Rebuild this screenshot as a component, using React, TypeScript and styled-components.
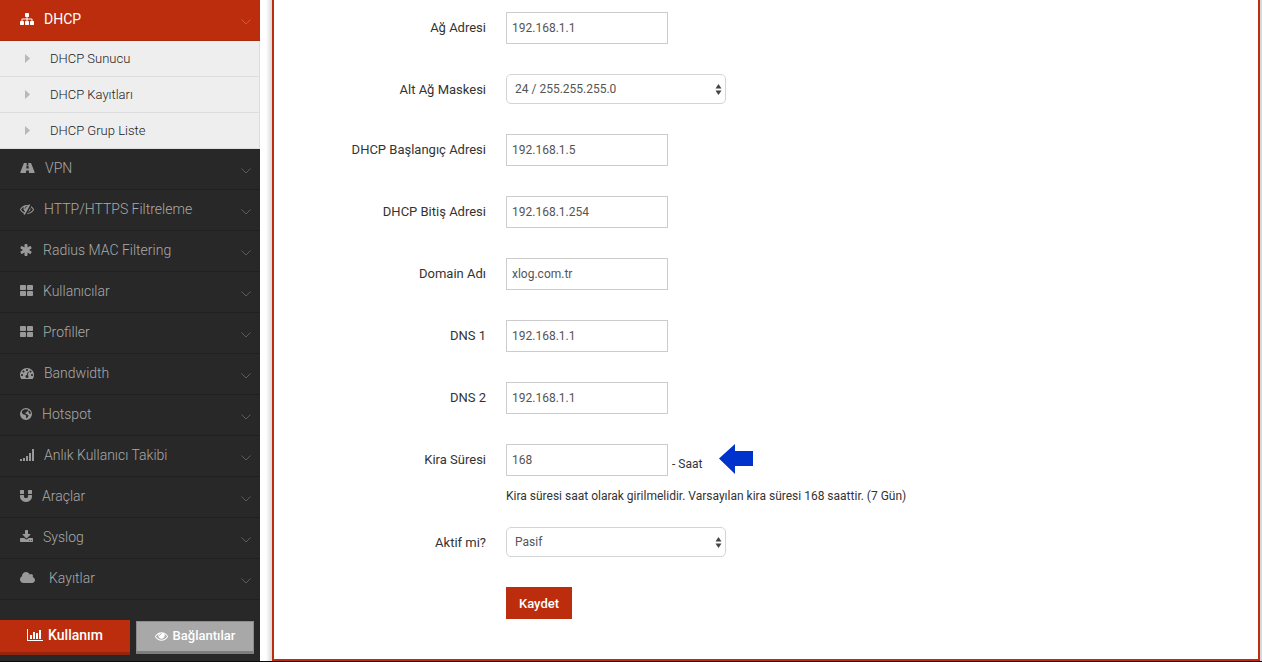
import React from "react";
import styled, { createGlobalStyle } from "styled-components";

const RED = "#bb2d0c";

const GlobalStyle = createGlobalStyle`
  *, *::before, *::after { box-sizing: border-box; }
  body { margin: 0; background: #0c0a0a; font-family: Roboto, "Liberation Sans", sans-serif; }
  button, input, select { font-family: inherit; }
`;

const Page = styled.div`
  display: flex;
  min-height: 100vh;
  border-bottom: 1px solid #0c0a0a;
`;

/* ---------- sidebar ---------- */

const Sidebar = styled.nav`
  flex: 0 0 260px;
  display: flex;
  flex-direction: column;
  background: #282828;
`;

const Menu = styled.ul`
  list-style: none;
  margin: 0;
  padding: 0;
`;

const MenuLink = styled.a<{ $active?: boolean; $wide?: boolean }>`
  display: flex;
  align-items: center;
  gap: ${(p) => (p.$wide ? 14 : 10)}px;
  height: 41px;
  padding: 0 9px 2px 20px;
  border-bottom: 1px solid ${(p) => (p.$active ? "#a92a0c" : "#202020")};
  background: ${(p) => (p.$active ? RED : "transparent")};
  color: ${(p) => (p.$active ? "#fff" : "#aaa")};
  font-size: 14px;
  font-weight: ${(p) => (p.$active ? 400 : 300)};
  line-height: 20px;
  text-decoration: none;

  > svg:first-child {
    color: ${(p) => (p.$active ? "#fff" : "#999")};
  }
`;

const Chevron = styled.svg<{ $active?: boolean }>`
  width: 10px;
  height: 6px;
  margin: 6px 0 0 auto;
  fill: none;
  stroke: ${(p) => (p.$active ? "#d05a40" : "#5c5c5c")};
`;

const SubLink = styled.a`
  display: flex;
  align-items: center;
  gap: 20px;
  height: 36px;
  padding-left: 25px;
  background: #eee;
  border-right: 1px solid #ddd;
  border-bottom: 1px solid #ddd;
  color: #222;
  font-size: 13px;
  font-weight: 300;
  text-decoration: none;
`;

const Caret = styled.svg`
  width: 5px;
  height: 9px;
  fill: #b8b8b8;
`;

const SideButtons = styled.div`
  display: flex;
  align-items: center;
  gap: 6px;
  margin-top: 20px;
  padding-right: 6px;
`;

const SideButton = styled.button<{ $primary?: boolean }>`
  display: flex;
  align-items: center;
  justify-content: center;
  gap: 5px;
  flex: ${(p) => (p.$primary ? "0 0 130px" : "1")};
  height: ${(p) => (p.$primary ? 35 : 33)}px;
  padding: 0 0 2px;
  border: ${(p) => (p.$primary ? "0" : "1px solid #8c8c8c")};
  border-bottom: 3px solid ${(p) => (p.$primary ? "#94240d" : "#7d7d7d")};
  background: ${(p) => (p.$primary ? RED : "#a8a8a8")};
  color: #fff;
  font-size: ${(p) => (p.$primary ? 14 : 13)}px;
  font-weight: 500;
`;

const IconSvg = styled.svg`
  flex: none;
  height: 14px;
  fill: currentColor;
`;

/* ---------- content ---------- */

const Main = styled.main`
  flex: 1;
  min-width: 0;
  display: flex;
  padding: 0 2px 0 12px;
  background: linear-gradient(to right, #fff 0, #fff 6px, #d8d8d8 12px);
`;

const Panel = styled.form`
  flex: 1;
  padding: 12px 20px 10px 0;
  border: 2px solid ${RED};
  border-top: 0;
  background: #fff;
`;

const Row = styled.div<{ $tight?: boolean }>`
  display: grid;
  grid-template-columns: 212px 1fr;
  column-gap: 20px;
  margin-bottom: ${(p) => (p.$tight ? 21 : 30)}px;
`;

const Label = styled.label`
  padding-top: 7px;
  color: #333;
  font-size: 13px;
  line-height: 18px;
  text-align: right;
`;

const Field = styled.div`
  grid-column: 2;
`;

const Input = styled.input`
  display: block;
  width: 162px;
  height: 32px;
  padding: 0 5px;
  border: 1px solid #ccc;
  border-radius: 0;
  background: #fff;
  color: #555;
  font-size: 12px;
`;

const SelectBox = styled.div`
  position: relative;
  width: 220px;
`;

const Select = styled.select`
  display: block;
  width: 100%;
  height: 30px;
  padding: 0 24px 0 8px;
  border: 1px solid #d4d4d4;
  border-radius: 5px;
  appearance: none;
  background: #fff;
  color: #555;
  font-size: 12px;
`;

const UpDown = styled.svg`
  position: absolute;
  top: 10px;
  right: 4px;
  width: 7px;
  height: 11px;
  fill: #444;
  pointer-events: none;
`;

const UnitLine = styled.div`
  display: flex;
  align-items: flex-end;
`;

const Unit = styled.span`
  padding: 0 0 3px 4px;
  color: #333;
  font-size: 12px;
  line-height: 18px;
`;

const Arrow = styled.svg`
  align-self: flex-start;
  width: 35px;
  height: 30px;
  margin-left: 17px;
  fill: #0033cc;
`;

const Hint = styled.p`
  margin: 10px 0 0;
  color: #333;
  font-size: 12px;
  line-height: 20px;
`;

const Save = styled.button`
  height: 32px;
  width: 66px;
  padding: 0;
  border: 0;
  background: ${RED};
  color: #fff;
  font-size: 13px;
  font-weight: 500;
`;

/* ---------- icons ---------- */

type IconDef = { w: number; box: string; body: React.ReactNode };

const dot = "q0-53-37.5-90.5t-90.5-37.5-90.5 37.5-37.5 90.5 37.5 90.5 90.5 37.5 90.5-37.5 37.5-90.5z";
const cell = "v384q0 52-38 90t-90 38h-512q-52 0-90-38t-38-90v-384q0-52 38-90t90-38h512q52 0 90 38t38 90z";
const pole = "v384q0 26-19 45t-45 19h-384q-26 0-45-19t-19-45v-384q0-26 19-45t45-19h384q26 0 45 19t19 45z";

const icons: Record<string, IconDef> = {
  sitemap: {
    w: 14,
    box: "0 0 1792 1792",
    body: <path d="M1792 1248v320q0 40-28 68t-68 28h-320q-40 0-68-28t-28-68v-320q0-40 28-68t68-28h96v-192h-512v192h96q40 0 68 28t28 68v320q0 40-28 68t-68 28h-320q-40 0-68-28t-28-68v-320q0-40 28-68t68-28h96v-192h-512v192h96q40 0 68 28t28 68v320q0 40-28 68t-68 28h-320q-40 0-68-28t-28-68v-320q0-40 28-68t68-28h96v-192q0-52 38-90t90-38h512v-192h-96q-40 0-68-28t-28-68v-320q0-40 28-68t68-28h320q40 0 68 28t28 68v320q0 40-28 68t-68 28h-96v192h512q52 0 90 38t38 90v192h96q40 0 68 28t28 68z" />,
  },
  road: {
    w: 15,
    box: "0 -110 1920 1792",
    body: <path d="M1111 825v-4l-24-320q-1-13-11-22.5t-23-9.5h-186q-13 0-23 9.500t-11 22.5l-24 320v4q-1 12 8 20t21 8h244q12 0 21-8t8-20zM1868 1353q0 73-46 73h-704q13 0 22-9.5t8-22.5l-20-256q-1-13-11-22.5t-23-9.5h-272q-13 0-23 9.500t-11 22.5l-20 256q-1 13 8 22.500t22 9.500h-704q-46 0-46-73 0-54 26-116l417-1044q8-19 26-33t38-14h339q-13 0-23 9.500t-11 22.500l-15 192q-1 14 8 23t22 9h166q13 0 22-9t8-23l-15-192q-1-13-11-22.500t-23-9.500h339q20 0 38 14t26 33l417 1044q26 62 26 116z" />,
  },
  eyeSlash: {
    w: 14,
    box: "0 0 1792 1792",
    body: <path d="M555 1335l78-141q-87-63-136-159t-49-203q0-121 61-225-229 117-381 353 167 258 427 375zm389-759q0-20-14-34t-34-14q-125 0-214.5 89.5t-89.5 214.5q0 20 14 34t34 14 34-14 14-34q0-86 61-147t147-61q20 0 34-14t14-34zm363-191q0 7-1 9-106 189-316 567t-315 566l-49 89q-10 16-28 16-12 0-134-70-16-10-16-28 0-12 44-87-143-65-263.5-173t-208.5-245q-20-31-20-69t20-69q153-235 380-371t496-136q89 0 180 17l54-97q10-16 28-16 5 0 18 6t31 15.5 33 18.5 31.5 18.5 19.5 11.5q16 10 16 27zm37 447q0 139-79 253.5t-209 164.5l280-502q8 45 8 84zm448 128q0 35-20 69-39 64-109 145-150 172-347.5 267t-419.500 95l74-132q212-18 392.5-137t301.5-307q-115-179-282-294l63-112q95 64 182.5 153t144.5 184q20 34 20 69z" />,
  },
  asterisk: {
    w: 13,
    box: "64 0 1664 1792",
    body: <path d="M1482 1050q46 26 59.5 77.5t-12.5 97.5l-64 110q-26 46-77.5 59.5t-97.5-12.5l-266-153v307q0 52-38 90t-90 38h-128q-52 0-90-38t-38-90v-307l-266 153q-46 26-97.5 12.5t-77.5-59.5l-64-110q-26-46-12.5-97.5t59.5-77.5l266-154-266-154q-46-26-59.500-77.5t12.5-97.5l64-110q26-46 77.500-59.5t97.5 12.500l266 153v-307q0-52 38-90t90-38h128q52 0 90 38t38 90v307l266-153q46-26 97.5-12.5t77.500 59.5l64 110q26 46 12.5 97.500t-59.5 77.5l-266 154z" />,
  },
  grid: {
    w: 13,
    box: "64 0 1664 1792",
    body: <path d={`M832 1024${cell}M832 256${cell}M1728 1024${cell}M1728 256${cell}`} />,
  },
  gauge: {
    w: 14,
    box: "0 0 1792 1792",
    body: <path d={`M384 1152${dot}M576 704${dot}M1004 1185l101-382q6-26-7.5-48.5t-38.5-29.5-48 6.5-30 39.5l-101 382q-60 5-107 43.5t-63 98.5q-20 77 20 146t117 89 146-20 89-117q16-60-6-117t-72-91zM1664 1152${dot}M1024 512${dot}M1472 704${dot}M1792 1152q0 261-141 483-19 29-54 29h-1402q-35 0-54-29-141-221-141-483 0-182 71-348t191-286 286-191 348-71 348 71 286 191 191 286 71 348z`} />,
  },
  globe: {
    w: 12,
    box: "0 0 12 14",
    body: (
      <path
        fillRule="evenodd"
        d="M6 1a6 6 0 1 1 0 12A6 6 0 0 1 6 1zM4.8 2.300 2.900 3.200 1.800 4.600l.3 1.700 1.400 1.100 1.500.4 1.300 1-.4 1.300.5 1.200.8-.2.800-1.400.6-1.300-1.100-.9-1.400-.4-.9-1 .7-.9 1.100.1.400-1.200 1-.7-.5-.9zM8.900 3.400l-.7 1 .5.900.4 1.300 1 .4.7-.5-.3-1.500-.8-1.300z"
      />
    ),
  },
  signal: {
    w: 14,
    box: "0 0 14 14",
    body: <path d="M0 11h2v2H0zM3 10h2v3H3zM6 8h2v5H6zM9 5h2v8H9zM12 1h2v12h-2z" />,
  },
  magnet: {
    w: 12,
    box: "128 0 1536 1792",
    body: <path d={`M1664 832v128q0 201-98.5 362t-274 251.5-395.5 90.5-395.500-90.5-274-251.5-98.500-362v-128q0-26 19-45t45-19h384q26 0 45 19t19 45v128q0 52 23.500 90t53.5 57 71 30 64 13 44 2 44-2 64-13 71-30 53.5-57 23.500-90v-128q0-26 19-45t45-19h384q26 0 45 19t19 45zM640 192${pole}M1664 192${pole}`} />,
  },
  download: {
    w: 13,
    box: "64 0 1664 1792",
    body: <path d="M1344 1344q0-26-19-45t-45-19-45 19-19 45 19 45 45 19 45-19 19-45zm256 0q0-26-19-45t-45-19-45 19-19 45 19 45 45 19 45-19 19-45zm128-224v320q0 40-28 68t-68 28h-1472q-40 0-68-28t-28-68v-320q0-40 28-68t68-28h465l135 136q58 56 136 56t136-56l136-136h464q40 0 68 28t28 68zm-325-569q17 41-14 70l-448 448q-18 19-45 19t-45-19l-448-448q-31-29-14-70 17-39 59-39h256v-448q0-26 19-45t45-19h256q26 0 45 19t19 45v448h256q42 0 59 39z" />,
  },
  cloud: {
    w: 15,
    box: "64 0 1920 1792",
    body: <path d="M1984 1152q0 159-112.5 271.5t-271.5 112.5h-1088q-185 0-316.5-131.5t-131.5-316.5q0-132 71-241.5t187-163.5q-2-28-2-43 0-212 150-362t362-150q158 0 286.5 88t187.5 230q70-62 166-62 106 0 181 75t75 181q0 75-41 138 129 30 213 134.5t84 239.5z" />,
  },
  chart: {
    w: 16,
    box: "0 0 16 14",
    body: <path d="M0 1h1v11h15v1H0zM3 7h2v4H3zM6 4h2v7H6zM9 5h2v6H9zM12 2h2v9h-2z" />,
  },
  eye: {
    w: 13,
    box: "0 0 1792 1792",
    body: <path d="M1664 960q-152-236-381-353 61 104 61 225 0 185-131.5 316.5t-316.5 131.5-316.5-131.5-131.5-316.5q0-121 61-225-229 117-381 353 133 205 333.5 326.5t434.5 121.5 434.5-121.5 333.5-326.5zm-720-384q0-20-14-34t-34-14q-125 0-214.5 89.5t-89.5 214.5q0 20 14 34t34 14 34-14 14-34q0-86 61-147t147-61q20 0 34-14t14-34zm848 384q0 34-20 69-140 230-376.5 368.5t-499.5 138.5-499.5-139-376.5-368q-20-35-20-69t20-69q140-229 376.5-368t499.5-139 499.5 139 376.5 368q20 35 20 69z" />,
  },
};

function Icon({ name }: { name: string }) {
  const { w, box, body } = icons[name];
  return (
    <IconSvg width={w} viewBox={box} aria-hidden="true">
      {body}
    </IconSvg>
  );
}

/* ---------- data ---------- */

const subItems = ["DHCP Sunucu", "DHCP Kayıtları", "DHCP Grup Liste"];

const menuItems = [
  { icon: "road", text: "VPN" },
  { icon: "eyeSlash", text: "HTTP/HTTPS Filtreleme" },
  { icon: "asterisk", text: "Radius MAC Filtering" },
  { icon: "grid", text: "Kullanıcılar" },
  { icon: "grid", text: "Profiller" },
  { icon: "gauge", text: "Bandwidth" },
  { icon: "globe", text: "Hotspot" },
  { icon: "signal", text: "Anlık Kullanıcı Takibi" },
  { icon: "magnet", text: "Araçlar" },
  { icon: "download", text: "Syslog" },
  { icon: "cloud", text: "Kayıtlar", wide: true },
];

const addressFields = [
  { id: "start", label: "DHCP Başlangıç Adresi", value: "192.168.1.5" },
  { id: "end", label: "DHCP Bitiş Adresi", value: "192.168.1.254" },
  { id: "domain", label: "Domain Adı", value: "xlog.com.tr" },
  { id: "dns1", label: "DNS 1", value: "192.168.1.1" },
  { id: "dns2", label: "DNS 2", value: "192.168.1.1" },
];

function MenuItem(props: { icon: string; text: string; active?: boolean; wide?: boolean; children?: React.ReactNode }) {
  return (
    <li>
      <MenuLink href="#" $active={props.active} $wide={props.wide}>
        <Icon name={props.icon} />
        {props.text}
        <Chevron $active={props.active} viewBox="0 0 10 6" aria-hidden="true">
          <path d="M.5.5 5 5 9.500.5" />
        </Chevron>
      </MenuLink>
      {props.children}
    </li>
  );
}

function TextRow({ id, label, value }: { id: string; label: string; value: string }) {
  return (
    <Row>
      <Label htmlFor={id}>{label}</Label>
      <Field>
        <Input id={id} type="text" defaultValue={value} />
      </Field>
    </Row>
  );
}

function SelectRow({ id, label, options }: { id: string; label: string; options: string[] }) {
  return (
    <Row>
      <Label htmlFor={id}>{label}</Label>
      <Field>
        <SelectBox>
          <Select id={id}>
            {options.map((o) => (
              <option key={o}>{o}</option>
            ))}
          </Select>
          <UpDown viewBox="0 0 7 11" aria-hidden="true">
            <path d="M3.500 0 6.500 4.500h-6zM.5 6.500h6L3.500 11z" />
          </UpDown>
        </SelectBox>
      </Field>
    </Row>
  );
}

export default function App() {
  return (
    <>
      <GlobalStyle />
      <Page>
        <Sidebar>
          <Menu>
            <MenuItem icon="sitemap" text="DHCP" active>
              <Menu>
                {subItems.map((t) => (
                  <li key={t}>
                    <SubLink href="#">
                      <Caret viewBox="0 0 5 9" aria-hidden="true">
                        <path d="M0 0 5 4.500 0 9z" />
                      </Caret>
                      {t}
                    </SubLink>
                  </li>
                ))}
              </Menu>
            </MenuItem>
            {menuItems.map((m) => (
              <MenuItem key={m.text} {...m} />
            ))}
          </Menu>
          <SideButtons>
            <SideButton type="button" $primary>
              <Icon name="chart" />
              Kullanım
            </SideButton>
            <SideButton type="button">
              <Icon name="eye" />
              Bağlantılar
            </SideButton>
          </SideButtons>
        </Sidebar>
        <Main>
          <Panel onSubmit={(e) => e.preventDefault()}>
            <TextRow id="network" label="Ağ Adresi" value="192.168.1.1" />
            <SelectRow id="mask" label="Alt Ağ Maskesi" options={["24 / 255.255.255.0", "16 / 255.255.0.0"]} />
            {addressFields.map((f) => (
              <TextRow key={f.id} {...f} />
            ))}
            <Row $tight>
              <Label htmlFor="lease">Kira Süresi</Label>
              <Field>
                <UnitLine>
                  <Input id="lease" type="text" defaultValue="168" />
                  <Unit>- Saat</Unit>
                  <Arrow viewBox="0 0 35 30" aria-hidden="true">
                    <path d="M0 14.500 16 0v7h18v15H16v8z" />
                  </Arrow>
                </UnitLine>
                <Hint>Kira süresi saat olarak girilmelidir. Varsayılan kira süresi 168 saattir. (7 Gün)</Hint>
              </Field>
            </Row>
            <SelectRow id="active" label="Aktif mi?" options={["Pasif", "Aktif"]} />
            <Row>
              <Field>
                <Save type="submit">Kaydet</Save>
              </Field>
            </Row>
          </Panel>
        </Main>
      </Page>
    </>
  );
}
